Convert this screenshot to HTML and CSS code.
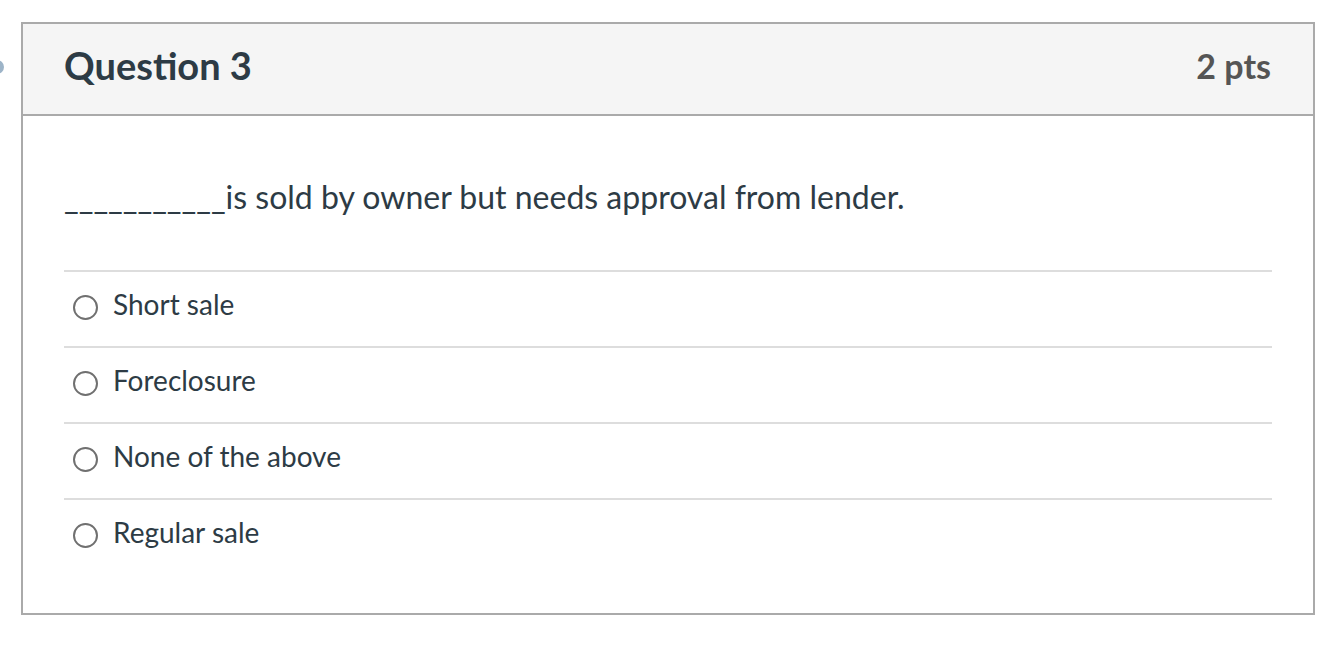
FILE: index.html
```html
<!DOCTYPE html>
<html>
  <head>
    <title>Question 3</title>
    <meta charset="UTF-8" />
    <link rel="stylesheet" href="styles.css">
  </head>
  <body>
    <span class="marker"></span>
    <div class="question">
      <div class="header">
        <span class="name">Question 3</span>
        <span class="points">2 pts</span>
      </div>
      <div class="content">
        <div class="text">___________is sold by owner but needs approval from lender.</div>
        <div class="answers">
          <label class="answer"><span class="radio"></span>Short sale</label>
          <label class="answer"><span class="radio"></span>Foreclosure</label>
          <label class="answer"><span class="radio"></span>None of the above</label>
          <label class="answer"><span class="radio"></span>Regular sale</label>
        </div>
      </div>
    </div>
  </body>
</html>
```

FILE: styles.css
```css
* {
  box-sizing: border-box;
}
html {
  background-color: #FFFFFF;
}
body {
  margin: 0;
  font-family: Lato, "Open Sans", sans-serif;
  color: #2D3B45;
}
.marker {
  position: absolute;
  top: 60px;
  left: -10px;
  width: 14px;
  height: 14px;
  border-radius: 50%;
  background: #9DB4C8;
}
.question {
  margin: 22px 0 0 21px;
  width: 1294px;
  height: 593px;
  border: 2px solid #AAAAAA;
}
.header {
  display: flex;
  justify-content: space-between;
  align-items: center;
  height: 92px;
  padding: 0 42px 8px 41px;
  background: #F5F5F5;
  border-bottom: 2px solid #AAAAAA;
}
.name {
  font-size: 38px;
  font-weight: 700;
  color: #2D3B45;
}
.points {
  font-size: 34px;
  font-weight: 700;
  color: #555555;
}
.content {
  padding: 0 41px;
}
.text {
  padding-top: 61px;
  height: 154px;
  font-size: 32px;
}
.answers {
  display: flex;
  flex-direction: column;
}
.answer {
  display: flex;
  align-items: center;
  height: 76px;
  padding: 0 0 10px 9px;
  border-top: 2px solid #DDDDDD;
  font-size: 28px;
}
.radio {
  width: 25px;
  height: 25px;
  margin: 6px 15px 0 0;
  border: 2px solid #707070;
  border-radius: 50%;
}
```
